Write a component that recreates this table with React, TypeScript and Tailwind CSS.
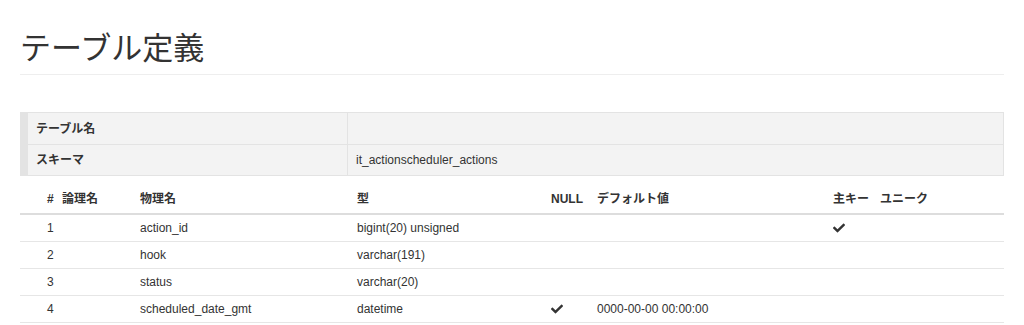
const font = "font-['Liberation_Sans','Noto_Sans_CJK_JP',sans-serif]";

const cols = "grid grid-cols-[34px_78px_217px_194px_46px_236px_47px_1fr]";

type Column = {
  no: string;
  logical: string;
  physical: string;
  type: string;
  nullable: boolean;
  def: string;
  pk: boolean;
  unique: boolean;
};

const columns: Column[] = [
  { no: "1", logical: "", physical: "action_id", type: "bigint(20) unsigned", nullable: false, def: "", pk: true, unique: false },
  { no: "2", logical: "", physical: "hook", type: "varchar(191)", nullable: false, def: "", pk: false, unique: false },
  { no: "3", logical: "", physical: "status", type: "varchar(20)", nullable: false, def: "", pk: false, unique: false },
  { no: "4", logical: "", physical: "scheduled_date_gmt", type: "datetime", nullable: true, def: "0000-00-00 00:00:00", pk: false, unique: false },
];

function Check() {
  return (
    <svg viewBox="0 0 512 512" className="h-[12px] w-[12px] fill-[#333]">
      <path d="M173.9 439.4l-166.4-166.4c-10-10-10-26.2 0-36.2l36.2-36.2c10-10 26.2-10 36.2 0L192 312.7 432.1 72.6c10-10 26.2-10 36.2 0l36.2 36.2c10 10 10 26.2 0 36.2l-294.4 294.4c-10 10-26.2 10-36.2 0z" />
    </svg>
  );
}

export default function App() {
  return (
    <div className={`min-h-[325px] bg-white px-[20px] pt-[32px] text-[#333] ${font}`}>
      <h1 className="border-b border-[#eee] pb-[9px] text-[31px] font-normal leading-[33px]">
        テーブル定義
      </h1>

      <div className="mt-[37px] border border-l-[8px] border-[#e3e3e3] bg-[#f3f3f3] text-[12px]">
        {[
          ["テーブル名", ""],
          ["スキーマ", "it_actionscheduler_actions"],
        ].map(([label, value], i) => (
          <div
            key={label}
            className={`grid h-[31px] grid-cols-[320px_1fr] items-center ${i > 0 ? "border-t border-[#e3e3e3]" : ""}`}
          >
            <div className="flex h-full items-center border-r border-[#e3e3e3] pl-[8px] font-bold">{label}</div>
            <div className="pl-[8px]">{value}</div>
          </div>
        ))}
      </div>

      <div className="mt-[9px] text-[12px]">
        <div className={`${cols} h-[30px] items-center border-b-2 border-[#ddd] font-bold`}>
          <div className="pl-[27px]">#</div>
          <div className="pl-[8px]">論理名</div>
          <div className="pl-[8px]">物理名</div>
          <div className="pl-[8px]">型</div>
          <div className="pl-[8px]">NULL</div>
          <div className="pl-[8px]">デフォルト値</div>
          <div className="pl-[8px]">主キー</div>
          <div className="pl-[8px]">ユニーク</div>
        </div>
        {columns.map((c) => (
          <div key={c.no} className={`${cols} h-[27px] items-center border-b border-[#e6e6e6]`}>
            <div className="pl-[27px]">{c.no}</div>
            <div className="pl-[8px]">{c.logical}</div>
            <div className="pl-[8px]">{c.physical}</div>
            <div className="pl-[8px]">{c.type}</div>
            <div className="pl-[8px]">{c.nullable && <Check />}</div>
            <div className="pl-[8px]">{c.def}</div>
            <div className="pl-[8px]">{c.pk && <Check />}</div>
            <div className="pl-[8px]">{c.unique && <Check />}</div>
          </div>
        ))}
      </div>
    </div>
  );
}
